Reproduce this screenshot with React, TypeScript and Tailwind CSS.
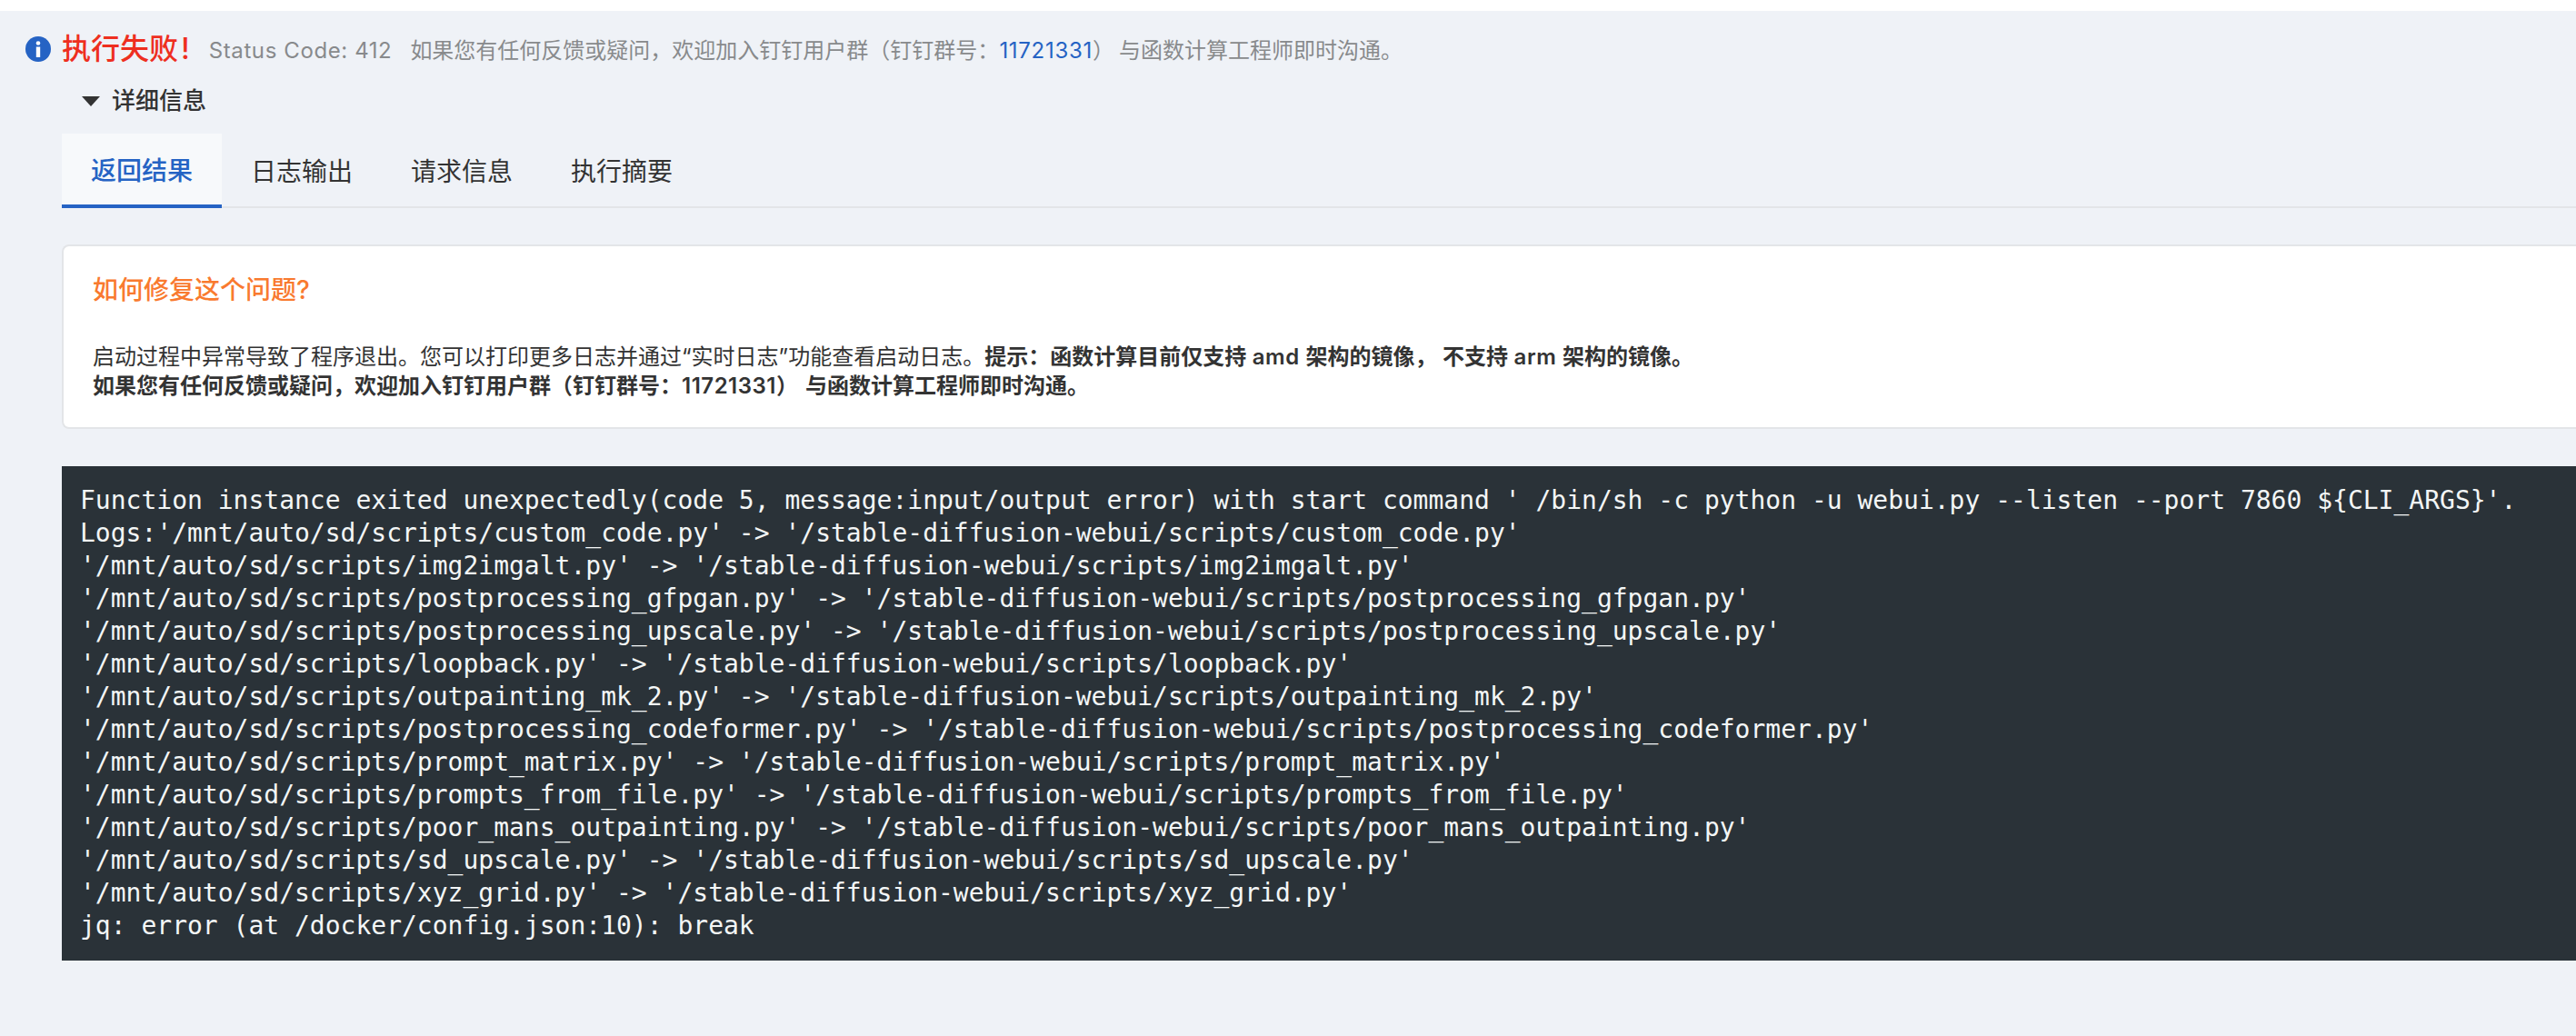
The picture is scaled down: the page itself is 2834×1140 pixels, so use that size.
const tabs = ["返回结果", "日志输出", "请求信息", "执行摘要"];

const logLines = [
  "Function instance exited unexpectedly(code 5, message:input/output error) with start command ' /bin/sh -c python -u webui.py --listen --port 7860 ${CLI_ARGS}'.",
  "Logs:'/mnt/auto/sd/scripts/custom_code.py' -> '/stable-diffusion-webui/scripts/custom_code.py'",
  "'/mnt/auto/sd/scripts/img2imgalt.py' -> '/stable-diffusion-webui/scripts/img2imgalt.py'",
  "'/mnt/auto/sd/scripts/postprocessing_gfpgan.py' -> '/stable-diffusion-webui/scripts/postprocessing_gfpgan.py'",
  "'/mnt/auto/sd/scripts/postprocessing_upscale.py' -> '/stable-diffusion-webui/scripts/postprocessing_upscale.py'",
  "'/mnt/auto/sd/scripts/loopback.py' -> '/stable-diffusion-webui/scripts/loopback.py'",
  "'/mnt/auto/sd/scripts/outpainting_mk_2.py' -> '/stable-diffusion-webui/scripts/outpainting_mk_2.py'",
  "'/mnt/auto/sd/scripts/postprocessing_codeformer.py' -> '/stable-diffusion-webui/scripts/postprocessing_codeformer.py'",
  "'/mnt/auto/sd/scripts/prompt_matrix.py' -> '/stable-diffusion-webui/scripts/prompt_matrix.py'",
  "'/mnt/auto/sd/scripts/prompts_from_file.py' -> '/stable-diffusion-webui/scripts/prompts_from_file.py'",
  "'/mnt/auto/sd/scripts/poor_mans_outpainting.py' -> '/stable-diffusion-webui/scripts/poor_mans_outpainting.py'",
  "'/mnt/auto/sd/scripts/sd_upscale.py' -> '/stable-diffusion-webui/scripts/sd_upscale.py'",
  "'/mnt/auto/sd/scripts/xyz_grid.py' -> '/stable-diffusion-webui/scripts/xyz_grid.py'",
  "jq: error (at /docker/config.json:10): break",
];

function InfoIcon() {
  return (
    <svg width="28" height="28" viewBox="0 0 28 28" className="shrink-0">
      <circle cx="14" cy="14" r="14" fill="#2563c4" />
      <circle cx="14" cy="7.5" r="2.3" fill="#fff" />
      <rect x="11.8" y="11.5" width="4.4" height="11.5" fill="#fff" />
    </svg>
  );
}

export default function App() {
  return (
    <div className="h-[1140px] w-full overflow-hidden bg-white font-['Inter','Noto_Sans_CJK_SC',sans-serif]">
      <div className="mt-3 h-[1128px] bg-[#eff2f7] pt-[26px]">
        <div className="flex h-8 items-center pl-7">
          <InfoIcon />
          <span className="ml-3 text-[32px] font-medium leading-8 text-[#ee2f1f]">
            执行失败<span className="ml-[3px]">!</span>
          </span>
          <span className="ml-[21px] pt-[3px] text-[24px] leading-8 text-[#888a8c]">
            <span className="tracking-[0.6px]">Status Code: 412</span>
            <span className="ml-[20px]">如果您有任何反馈或疑问，欢迎加入钉钉用户群（钉钉群号：</span>
            <span className="tracking-[0.7px] text-[#2563c4]">11721331</span>
            <span className="mr-[5px]">）</span>
            <span>与函数计算工程师即时沟通。</span>
          </span>
        </div>

        <div className="pl-[68px]">
          <div className="mt-[25px] flex h-8 items-center pl-[22px]">
            <span className="h-0 w-0 border-x-[10px] border-t-[11px] border-x-transparent border-t-[#333]" />
            <span className="ml-[13px] text-[26px] font-medium leading-8 text-[#333]">详细信息</span>
          </div>

          <div className="mt-5 flex h-[82px] border-b-2 border-[#e3e5e8]">
            {tabs.map((tab, i) => (
              <div
                key={tab}
                className={
                  i === 0
                    ? "-mb-0.5 flex w-[176px] items-center justify-center border-b-4 border-[#2563c4] bg-[#f7f9fb] pt-1 text-[28px] font-medium text-[#2563c4]"
                    : "flex w-[176px] items-center justify-center pt-1 text-[28px] text-[#333]"
                }
              >
                {tab}
              </div>
            ))}
          </div>

          <div className="mt-10 h-[203px] rounded-l-lg border-y-2 border-l-2 border-[#e3e5e8] bg-white pl-8">
            <h2 className="pt-[28px] text-[28px] font-medium leading-10 text-[#f97a2f]">如何修复这个问题?</h2>
            <div className="mt-[38px] text-[24px] leading-8 text-[#333]">
              <p>
                启动过程中异常导致了程序退出。您可以打印更多日志并通过“实时日志”功能查看启动日志。
                <b className="font-semibold [word-spacing:0.5px]">
                  提示：函数计算目前仅支持 <span className="tracking-[0.6px]">amd</span> 架构的镜像， 不支持{" "}
                  <span className="tracking-[0.6px]">arm</span> 架构的镜像。
                </b>
              </p>
              <p className="font-semibold">
                如果您有任何反馈或疑问，欢迎加入钉钉用户群（钉钉群号：<span className="tracking-[0.5px]">11721331</span>
                <span className="mr-2">）</span>与函数计算工程师即时沟通。
              </p>
            </div>
          </div>

          <pre className="mt-[41px] h-[544px] overflow-hidden bg-[#2a3238] px-5 pt-[20px] font-['DejaVu_Sans_Mono',monospace] text-[28px] leading-9 text-[#f3f6f6]">
            {logLines.join("\n")}
          </pre>
        </div>
      </div>
    </div>
  );
}
